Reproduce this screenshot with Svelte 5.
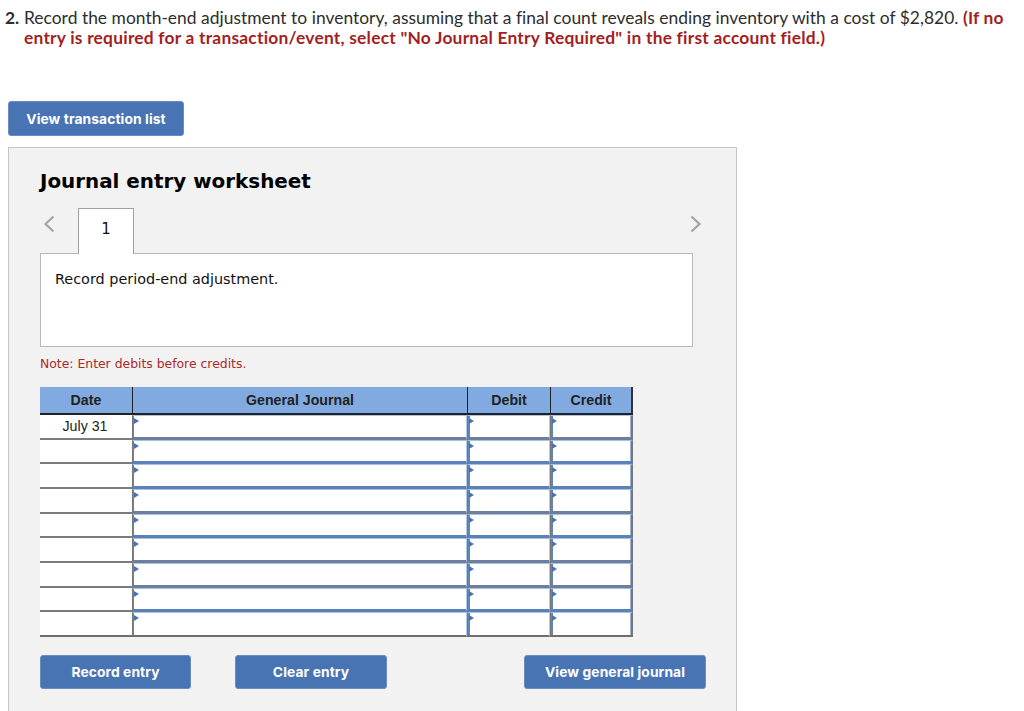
<script>
  const rows = ['July 31', '', '', '', '', '', '', '', ''];
  const grayRows = [0, 3, 5, 6];
</script>

<main class="page">
  <p class="question">
    <b class="num">2.</b>
    <span class="qtext">Record the month-end adjustment to inventory, assuming that a final count reveals ending inventory with a cost of $2,820. <b class="red">(If no entry is required for a transaction/event, select "No Journal Entry Required" in the first account field.)</b></span>
  </p>

  <button class="btn list-btn">View transaction list</button>

  <section class="panel">
    <h2>Journal entry worksheet</h2>

    <div class="tabs">
      <svg class="chev" width="12" height="18" viewBox="0 0 12 18"><path d="M10.5 1.5 2.5 9l8 7.5" fill="none" stroke="#a3a3a3" stroke-width="2.2"/></svg>
      <div class="tab">1</div>
      <svg class="chev next" width="12" height="18" viewBox="0 0 12 18"><path d="M1.5 1.5 9.5 9l-8 7.5" fill="none" stroke="#a3a3a3" stroke-width="2.2"/></svg>
    </div>

    <div class="desc">Record period-end adjustment.</div>
    <p class="note">Note: Enter debits before credits.</p>

    <div class="journal">
      <div class="head first">Date</div>
      <div class="head">General Journal</div>
      <div class="head">Debit</div>
      <div class="head last">Credit</div>
      {#each rows as date, i}
        <div class="date">{date}</div>
        <div class="cell" class:gray={grayRows.includes(i)}><span class="flag"></span></div>
        <div class="cell amount" class:gray={grayRows.includes(i)}><span class="flag"></span></div>
        <div class="cell amount end" class:gray={grayRows.includes(i)}><span class="flag"></span></div>
      {/each}
    </div>

    <div class="actions">
      <button class="btn record">Record entry</button>
      <button class="btn clear">Clear entry</button>
      <button class="btn view">View general journal</button>
    </div>
  </section>
</main>

<style>
  :global(body) { margin: 0; background: #fff; overflow: hidden; }
  .page { height: 711px; overflow: hidden; padding: 8px 8px 0; box-sizing: border-box; }
  .question {
    margin: 0 0 53px -3px; display: flex; gap: 5px;
    font: 17.4px/20px Lato, "Open Sans", sans-serif; color: #2d2d2d; width: 1005px;
    letter-spacing: 0.026px;
  }
  .num { font-weight: 700; width: 14px; flex: none; }
  .red { color: #a31f1f; font-weight: 700; letter-spacing: 0.22px; }
  .btn {
    display: block; box-sizing: border-box; height: 34px; border: 1px solid #6a8dc2; border-radius: 3px;
    background: #4874b4; color: #fff; font: 700 13.8px/1 Inter, "Open Sans", sans-serif;
    letter-spacing: 0.1px; padding: 2px 0 0;
  }
  .list-btn { width: 176px; height: 35px; }
  .panel {
    margin-top: 11px; width: 729px; height: 600px; box-sizing: border-box;
    background: #f2f2f2; border: 1px solid #c6c6c6; padding: 0 0 0 31px;
  }
  h2 {
    margin: 22px 0 0; font: 700 19.9px/24px "DejaVu Sans", sans-serif; color: #000;
  }
  .tabs { margin-top: 14px; height: 45px; width: 653px; display: flex; align-items: flex-start; position: relative; z-index: 1; }
  .chev { margin: 7px 0 0 3px; flex: none; }
  .tab {
    box-sizing: border-box; margin-left: 23px; width: 56px; height: 46px; background: #fff;
    border: 1px solid #a0a0a0; border-bottom: 0; text-align: center;
    font: 15px/40px "DejaVu Sans", sans-serif; color: #111;
  }
  .next { margin-left: auto; margin-right: -9px; }
  .desc {
    box-sizing: border-box; width: 653px; height: 94px; background: #fff; border: 1px solid #b8b8b8;
    padding: 15px 14px; font: 14.4px/20px "DejaVu Sans", sans-serif; color: #111;
  }
  .note { margin: 9px 0 0; font: 12.4px/16px "DejaVu Sans", sans-serif; color: #a82a2a; }
  .journal {
    margin-top: 15px; width: 593px; display: grid;
    grid-template-columns: 92px 335px 83px 83px;
    grid-template-rows: 28px repeat(9, 24.67px);
    font: 14.2px "Liberation Sans", Arial, sans-serif; color: #222;
  }
  .head {
    background: #81aae0; font-weight: 700; display: flex; align-items: center; justify-content: center;
    border-bottom: 2px solid #222; border-left: 1px solid #222; box-sizing: border-box;
  }
  .head.first { border-left: 0; }
  .head.last { border-right: 2px solid #333; }
  .date {
    background: #fff; border-bottom: 2px solid #7c7c7c; box-sizing: border-box;
    display: flex; align-items: center; justify-content: center; padding-right: 2px;
  }
  .cell {
    position: relative; background: #fff; box-sizing: border-box;
    border-style: solid; border-width: 1px 1px 3px 1px;
    border-color: #a8c0e4 #b5c9e6 #5b82b8 #777;
    box-shadow: inset 1px 0 0 #5f85bb;
  }
  .cell.amount { box-shadow: inset 2px 0 0 #5f85bb; }
  .cell.gray { border-bottom-color: #6c7f9c; }
  .cell.end { border-right: 2px solid #777; box-shadow: inset 2px 0 0 #5f85bb, inset -1px 0 0 #9cb6dd; }
  .journal > .date:nth-last-child(4) { border-bottom: 2px solid #6e6e6e; }
  .journal > .cell:nth-last-child(-n+3) { border-bottom: 2px solid #6e6e6e; }
  .flag {
    position: absolute; left: 1px; top: 2px; width: 0; height: 0;
    border-left: 5px solid #4874b4; border-top: 3px solid transparent; border-bottom: 3px solid transparent;
  }
  .actions { margin-top: 18px; width: 666px; display: flex; }
  .record { width: 151px; }
  .clear { width: 152px; margin-left: 44px; }
  .view { width: 182px; margin-left: auto; }
</style>
